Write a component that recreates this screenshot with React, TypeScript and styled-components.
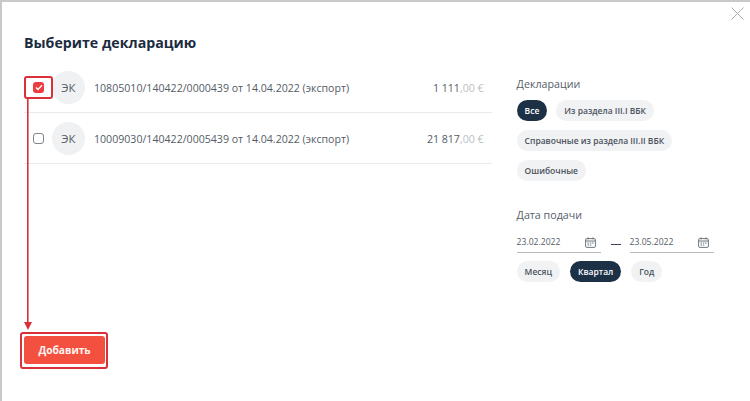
import React from 'react';
import styled, { createGlobalStyle } from 'styled-components';

const GlobalStyle = createGlobalStyle`
  html, body {
    margin: 0;
    padding: 0;
    background: #fff;
  }
`;

const Modal = styled.div`
  position: relative;
  box-sizing: border-box;
  width: 750px;
  height: 401px;
  padding: 31px 36px 0 22px;
  background: #fff;
  border-top: 2px solid #c9c9c9;
  border-left: 2px solid #c9c9c9;
  font-family: 'Open Sans', 'Noto Sans', sans-serif;
  color: #1d2f45;
`;

const CloseButton = styled.svg`
  position: absolute;
  top: 4px;
  right: 5px;
`;

const Title = styled.h2`
  margin: 0 0 9px;
  font-size: 14.2px;
  line-height: 20px;
  font-weight: 700;
  color: #1b2b40;
`;

const Content = styled.div`
  display: flex;
  gap: 25px;
`;

const ListColumn = styled.div`
  width: 469px;
`;

const Row = styled.div`
  display: flex;
  align-items: center;
  box-sizing: border-box;
  height: 51px;
  padding-top: 1px;
  border-bottom: 1px solid #e8e9eb;
`;

const Check = styled.span<{ $checked?: boolean }>`
  display: flex;
  align-items: center;
  justify-content: center;
  box-sizing: border-box;
  width: 11px;
  height: 11px;
  margin-left: 9px;
  margin-right: 8px;
  border-radius: 3px;
  border: ${({ $checked }) => ($checked ? 'none' : '1px solid #7f858d')};
  background: ${({ $checked }) => ($checked ? '#ee3b3f' : '#fff')};
`;

const Avatar = styled.span`
  display: flex;
  align-items: center;
  justify-content: center;
  flex: none;
  width: 33px;
  height: 33px;
  margin-right: 9px;
  border-radius: 50%;
  background: #f0f1f2;
  font-size: 11.5px;
  color: #555d68;
`;

const DeclarationName = styled.span`
  flex: 1;
  font-size: 10.6px;
  color: #545b66;
  white-space: nowrap;
`;

const Amount = styled.span`
  font-size: 10.6px;
  margin-right: 8px;
  color: #545b66;
  white-space: nowrap;
`;

const Cents = styled.span`
  color: #bcbec1;
`;

const Sidebar = styled.div`
  width: 198px;
  margin-top: 14px;
`;

const Label = styled.div`
  font-size: 10.7px;
  line-height: 16px;
  color: #555d68;
`;

const PillGroup = styled.div`
  display: flex;
  flex-wrap: wrap;
  gap: 9px;
  margin-top: 8px;
`;

const Pill = styled.span<{ $active?: boolean }>`
  display: inline-flex;
  align-items: center;
  height: 21px;
  padding: 0 8px;
  border-radius: 11px;
  font-size: 8.5px;
  font-weight: 600;
  white-space: nowrap;
  background: ${({ $active }) => ($active ? '#1c3046' : '#f1f2f3')};
  color: ${({ $active }) => ($active ? '#fff' : '#4b535e')};
`;

const DateLabel = styled(Label)`
  margin-top: 26px;
`;

const DateRange = styled.div`
  display: flex;
  align-items: center;
  margin-top: 9px;
  width: 197px;
`;

const DateField = styled.div`
  display: flex;
  align-items: center;
  justify-content: space-between;
  box-sizing: border-box;
  width: 84px;
  height: 21px;
  padding-right: 5px;
  border-bottom: 1px solid #b9bcc0;
  font-size: 8.6px;
  color: #555d68;
`;

const Dash = styled.span`
  width: 10px;
  height: 1px;
  margin: 3px 9px 0 10px;
  background: #3d4652;
`;

const DatePills = styled(PillGroup)`
  margin-top: 8px;
  gap: 10px;
`;

const AddButton = styled.button`
  position: absolute;
  left: 22px;
  top: 334px;
  width: 81px;
  height: 28px;
  padding: 0;
  border: none;
  border-radius: 3px;
  background: #f4503f;
  color: #fff6f2;
  font-family: inherit;
  font-size: 10.2px;
  font-weight: 700;
`;

const Highlight = styled.div<{ $left: number; $top: number; $width: number; $height: number }>`
  position: absolute;
  box-sizing: border-box;
  left: ${({ $left }) => $left}px;
  top: ${({ $top }) => $top}px;
  width: ${({ $width }) => $width}px;
  height: ${({ $height }) => $height}px;
  border: 2px solid #d8313a;
  border-radius: 3px;
`;

const Arrow = styled.svg`
  position: absolute;
  left: 20px;
  top: 96px;
`;

const CalendarIcon = () => (
  <svg width="11" height="11" viewBox="0 0 11 11" fill="none" stroke="#5e6670" strokeWidth="0.9">
    <rect x="0.6" y="1.6" width="9.8" height="8.8" rx="1.2" />
    <path d="M0.6 4h9.8M3 0.4v2M8 0.4v2" />
    <path d="M2.5 6h1.5M4.8 6h1.5M7 6h1.5M2.5 8h1.5M4.8 8h1.5" />
  </svg>
);

const declarations = [
  { id: 1, name: '10805010/140422/0000439 от 14.04.2022 (экспорт)', amount: '1 111', checked: true },
  { id: 2, name: '10009030/140422/0005439 от 14.04.2022 (экспорт)', amount: '21 817', checked: false },
];

const App: React.FC = () => {
  return (
    <>
      <GlobalStyle />
      <Modal>
        <CloseButton width="15" height="15" viewBox="0 0 15 15" stroke="#a9adb2" strokeWidth="1">
          <path d="M1.5 1.5l12 12M13.5 1.5l-12 12" />
        </CloseButton>
        <Title>Выберите декларацию</Title>
        <Content>
          <ListColumn>
            {declarations.map((item) => (
              <Row key={item.id}>
                <Check $checked={item.checked}>
                  {item.checked && (
                    <svg width="8" height="7" viewBox="0 0 8 7" fill="none" stroke="#fff" strokeWidth="1.4">
                      <path d="M1 3.5l2 2 4-4.2" />
                    </svg>
                  )}
                </Check>
                <Avatar>ЭК</Avatar>
                <DeclarationName>{item.name}</DeclarationName>
                <Amount>
                  {item.amount}
                  <Cents>,00 €</Cents>
                </Amount>
              </Row>
            ))}
          </ListColumn>
          <Sidebar>
            <Label>Декларации</Label>
            <PillGroup>
              <Pill $active>Все</Pill>
              <Pill>Из раздела III.I ВБК</Pill>
              <Pill>Справочные из раздела III.II ВБК</Pill>
              <Pill>Ошибочные</Pill>
            </PillGroup>
            <DateLabel>Дата подачи</DateLabel>
            <DateRange>
              <DateField>
                23.02.2022
                <CalendarIcon />
              </DateField>
              <Dash />
              <DateField>
                23.05.2022
                <CalendarIcon />
              </DateField>
            </DateRange>
            <DatePills>
              <Pill>Месяц</Pill>
              <Pill $active>Квартал</Pill>
              <Pill>Год</Pill>
            </DatePills>
          </Sidebar>
        </Content>
        <AddButton>Добавить</AddButton>
        <Highlight $left={22} $top={74} $width={29} $height={23} />
        <Highlight $left={18} $top={330} $width={88} $height={37} />
        <Arrow width="12" height="234" viewBox="0 0 12 234" fill="#d8313a">
          <rect x="5" y="0" width="1.6" height="226" />
          <path d="M2 224h8l-4 8z" />
        </Arrow>
      </Modal>
    </>
  );
};

export default App;
